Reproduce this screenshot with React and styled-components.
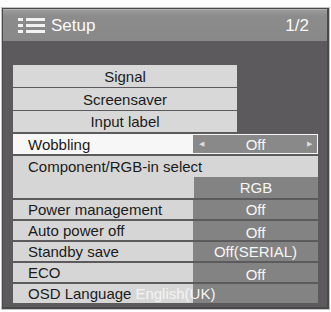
import React from "react";
import styled, { createGlobalStyle } from "styled-components";

const Global = createGlobalStyle`
  html, body { margin: 0; padding: 0; background: #ffffff; }
  body { font-family: "Liberation Sans", Arial, sans-serif; }
  * { box-sizing: border-box; }
`;

const Frame = styled.div`
  margin: 7px 0 0 1px;
  width: 329px;
  border: 1px solid #c4c4c4;
  background: #4a4a4a;
  padding: 1px 2px 2px 1px;
`;

const Header = styled.div`
  height: 32px;
  display: flex;
  align-items: center;
  padding: 0 18px 0 15px;
  background: linear-gradient(#9a9a9a, #8c8c8c 20%, #888888);
  border-top: 1px solid #b2b2b2;
  color: #fafafa;
`;

const Title = styled.span`
  font-size: 17px;
  margin-left: 5px;
  flex: 1;
`;

const Page = styled.span`
  font-size: 17px;
`;

const Panel = styled.div`
  background: #5c5a5c;
  padding: 24px 9px 4px 10px;
  display: flex;
  flex-direction: column;
`;

const ButtonGroup = styled.div`
  width: 224px;
  display: flex;
  flex-direction: column;
  gap: 1px;
  margin-bottom: 2px;
`;

const MenuButton = styled.div`
  height: ${(p) => p.$h}px;
  background: #d8d8d8;
  color: #1b1b1b;
  font-size: 15px;
  display: flex;
  align-items: center;
  justify-content: center;
`;

const Rows = styled.div`
  display: flex;
  flex-direction: column;
  gap: 2px;
`;

const Row = styled.div`
  height: ${(p) => p.$h || 19}px;
  display: flex;
  align-items: stretch;
  background: ${(p) =>
    p.$selected
      ? "#f7f7f7"
      : "linear-gradient(to right, #d6d6d6 180px, #838383 180px)"};
  font-size: 15px;
`;

const Label = styled.div`
  width: 180px;
  padding-left: 15px;
  display: flex;
  align-items: center;
  color: #1b1b1b;
  white-space: nowrap;
`;

const InlineValue = styled.span`
  color: #f4f4f4;
  margin-left: 4px;
`;

const Value = styled.div`
  flex: 1;
  display: flex;
  align-items: center;
  justify-content: center;
  color: #f6f6f6;
  padding-top: ${(p) => p.$drop || 0}px;
`;

const SelectBox = styled.div`
  flex: 1;
  margin: 1px 1px 1px 0;
  background: #898989;
  display: flex;
  align-items: center;
  justify-content: space-between;
  padding: 0 5px 0 6px;
  color: #f6f6f6;
`;

const Arrow = styled.span`
  font-size: 7px;
  color: #dcdcdc;
`;

const Block = styled.div`
  background: #d6d6d6;
  display: flex;
  flex-direction: column;
`;

const SubRow = styled.div`
  height: 21px;
  display: flex;
  font-size: 15px;
`;

const ValueBox = styled.div`
  margin-left: auto;
  width: 124px;
  background: #838383;
  color: #f6f6f6;
  display: flex;
  align-items: center;
  justify-content: center;
`;

const ListIcon = () => (
  <svg width="28" height="15" viewBox="0 0 28 15">
    {[0, 6, 12].map((y) => (
      <g key={y} fill="#f2f2f2">
        <rect x="0" y={y} width="5" height="3" />
        <rect x="8" y={y} width="19" height="3" />
      </g>
    ))}
  </svg>
);

const settings = [
  { label: "Power management", value: "Off" },
  { label: "Auto power off", value: "Off", drop: 3 },
  { label: "Standby save", value: "Off(SERIAL)" },
  { label: "ECO", value: "Off", drop: 3 },
];

export default function App() {
  return (
    <>
      <Global />
      <Frame>
        <Header>
          <ListIcon />
          <Title>Setup</Title>
          <Page>1/2</Page>
        </Header>
        <Panel>
          <ButtonGroup>
            <MenuButton $h={22}>Signal</MenuButton>
            <MenuButton $h={22}>Screensaver</MenuButton>
            <MenuButton $h={21}>Input label</MenuButton>
          </ButtonGroup>
          <Rows>
            <Row $selected $h={20}>
              <Label>Wobbling</Label>
              <SelectBox>
                <Arrow>◀</Arrow>
                <span>Off</span>
                <Arrow>▶</Arrow>
              </SelectBox>
            </Row>
            <Block>
              <SubRow>
                <Label>Component/RGB-in select</Label>
              </SubRow>
              <SubRow>
                <ValueBox>RGB</ValueBox>
              </SubRow>
            </Block>
            {settings.map((s) => (
              <Row key={s.label}>
                <Label>{s.label}</Label>
                <Value $drop={s.drop}>{s.value}</Value>
              </Row>
            ))}
            <Row>
              <Label>
                OSD Language<InlineValue>English(UK)</InlineValue>
              </Label>
              <Value />
            </Row>
          </Rows>
        </Panel>
      </Frame>
    </>
  );
}
